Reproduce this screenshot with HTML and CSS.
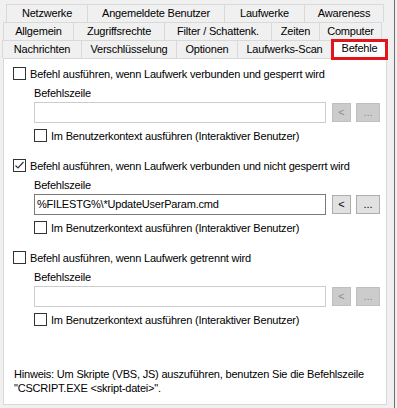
FILE: index.html
```html
<!DOCTYPE html>
<html>

<head>
    <meta charset='UTF-8'>
    <title>Befehle</title>
    <link rel="stylesheet" href="styles.css">
</head>

<body>
    <div class="screen">
        <!-- Reiter, drei Zeilen -->
        <div class="tabs">
            <div class="tab-row row-1">
                <div class="tab w-netz">Netzwerke</div>
                <div class="tab w-user">Angemeldete Benutzer</div>
                <div class="tab w-lw">Laufwerke</div>
                <div class="tab w-aware">Awareness</div>
            </div>
            <div class="tab-row row-2">
                <div class="tab w-allg">Allgemein</div>
                <div class="tab w-zugr">Zugriffsrechte</div>
                <div class="tab w-filter">Filter / Schattenk.</div>
                <div class="tab w-zeit">Zeiten</div>
                <div class="tab w-comp">Computer</div>
            </div>
            <div class="tab-row row-3">
                <div class="tab w-nachr">Nachrichten</div>
                <div class="tab w-versch">Verschlüsselung</div>
                <div class="tab w-opt">Optionen</div>
                <div class="tab w-scan">Laufwerks-Scan</div>
                <div class="tab tab-active w-bef">Befehle</div>
            </div>
        </div>

        <div class="panel">
            <div class="cmd">
                <label class="check-line">
                    <span class="box"></span>
                    <span>Befehl ausführen, wenn Laufwerk verbunden und gesperrt wird</span>
                </label>
                <div class="field">
                    <div class="field-label">Befehlszeile</div>
                    <div class="input-line">
                        <div class="input disabled"></div>
                        <button class="btn btn-arrow" disabled>&lt;</button>
                        <button class="btn btn-more" disabled>...</button>
                    </div>
                    <label class="check-line">
                        <span class="box"></span>
                        <span>Im Benutzerkontext ausführen (Interaktiver Benutzer)</span>
                    </label>
                </div>
            </div>

            <div class="cmd">
                <label class="check-line">
                    <span class="box checked">
                        <svg width="11" height="11" viewBox="0 0 11 11"><path d="M1.5 5.5 L4 8 L9.5 2" fill="none" stroke="#333" stroke-width="1.2"/></svg>
                    </span>
                    <span>Befehl ausführen, wenn Laufwerk verbunden und nicht gesperrt wird</span>
                </label>
                <div class="field">
                    <div class="field-label">Befehlszeile</div>
                    <div class="input-line">
                        <div class="input">%FILESTG%\*UpdateUserParam.cmd</div>
                        <button class="btn btn-arrow">&lt;</button>
                        <button class="btn btn-more">...</button>
                    </div>
                    <label class="check-line">
                        <span class="box"></span>
                        <span>Im Benutzerkontext ausführen (Interaktiver Benutzer)</span>
                    </label>
                </div>
            </div>

            <div class="cmd">
                <label class="check-line">
                    <span class="box"></span>
                    <span>Befehl ausführen, wenn Laufwerk getrennt wird</span>
                </label>
                <div class="field">
                    <div class="field-label">Befehlszeile</div>
                    <div class="input-line">
                        <div class="input disabled"></div>
                        <button class="btn btn-arrow" disabled>&lt;</button>
                        <button class="btn btn-more" disabled>...</button>
                    </div>
                    <label class="check-line">
                        <span class="box"></span>
                        <span>Im Benutzerkontext ausführen (Interaktiver Benutzer)</span>
                    </label>
                </div>
            </div>

            <p class="hint">Hinweis: Um Skripte (VBS, JS) auszuführen, benutzen Sie die Befehlszeile<br>"CSCRIPT.EXE &lt;skript-datei&gt;".</p>
        </div>
    </div>
</body>

</html>
```

FILE: styles.css
```css
/* Grundlayout */
body {
    margin: 0;
    width: 397px;
    height: 408px;
    background-color: #f0f0f0;
    font-family: "Liberation Sans", Arial, sans-serif;
    font-size: 11px;
    letter-spacing: -0.2px;
    color: #000;
    overflow: hidden;
}

.screen {
    width: 395px;
    height: 408px;
    border-right: 1px solid #6d6d6d;
    padding-top: 4px;
    box-sizing: border-box;
}

/* Reiter */
.tab-row {
    display: flex;
    height: 18px;
}

.row-1 {
    margin-left: 6px;
}

.row-2 {
    margin-left: 3px;
}

.row-3 {
    margin-left: 2px;
}

.tab {
    box-sizing: border-box;
    height: 18px;
    border-top: 1px solid #d9d9d9;
    border-left: 1px solid #d9d9d9;
    line-height: 17px;
    text-align: center;
    white-space: nowrap;
}

.tab:last-child {
    border-right: 1px solid #d9d9d9;
}

.w-netz { width: 81px; }
.w-user { width: 137px; }
.w-lw { width: 80px; }
.w-aware { width: 80px; }

.w-allg { width: 70px; }
.w-zugr { width: 91px; }
.w-filter { width: 107px; }
.w-zeit { width: 48px; }
.w-comp { width: 63px; }

.w-nachr { width: 79px; }
.w-versch { width: 95px; }
.w-opt { width: 61px; }
.w-scan { width: 94px; }

/* aktiver Reiter mit roter Markierung */
.tab-active {
    width: 57px;
    height: 21px;
    margin-top: -1px;
    background-color: #fff;
    border: 3px solid #e3141c;
    line-height: 13px;
    position: relative;
    z-index: 2;
}

.tab-active.tab:last-child {
    border-right: 3px solid #e3141c;
}

/* Inhalt */
.panel {
    box-sizing: border-box;
    width: 384px;
    height: 347px;
    margin-left: 3px;
    background-color: #fff;
    border: 1px solid #d9d9d9;
    padding: 8px 0 0 9px;
    display: flex;
    flex-direction: column;
}

.cmd {
    display: flex;
    flex-direction: column;
    margin-bottom: 17px;
}

.cmd:nth-child(2) {
    margin-bottom: 17px;
}

.check-line {
    display: flex;
    align-items: center;
    height: 13px;
    gap: 4px;
    white-space: nowrap;
}

.box {
    box-sizing: border-box;
    width: 13px;
    height: 13px;
    border: 1px solid #333;
    background-color: #fff;
    flex: none;
    display: flex;
    align-items: center;
    justify-content: center;
}

.field {
    padding-left: 21px;
    padding-top: 7px;
}

.field-label {
    height: 13px;
    line-height: 13px;
}

.input-line {
    display: flex;
    align-items: center;
    margin-top: 2px;
    margin-bottom: 6px;
}

.input {
    box-sizing: border-box;
    width: 292px;
    height: 21px;
    border: 1px solid #7a7a7a;
    padding-left: 2px;
    line-height: 19px;
    white-space: nowrap;
}

.input.disabled {
    border-color: #cccccc;
}

.btn {
    box-sizing: border-box;
    height: 19px;
    padding: 0;
    margin-left: 6px;
    font: inherit;
    color: #000;
    background-color: #e1e1e1;
    border: 1px solid #adadad;
    line-height: 15px;
}

.btn-arrow {
    width: 19px;
}

.btn-more {
    width: 24px;
    margin-left: 5px;
}

.btn:disabled {
    background-color: #cccccc;
    border-color: #bfbfbf;
    color: #8c8c8c;
}

.hint {
    margin: auto 0 0 1px;
    padding-bottom: 9px;
    line-height: 14px;
}
```
